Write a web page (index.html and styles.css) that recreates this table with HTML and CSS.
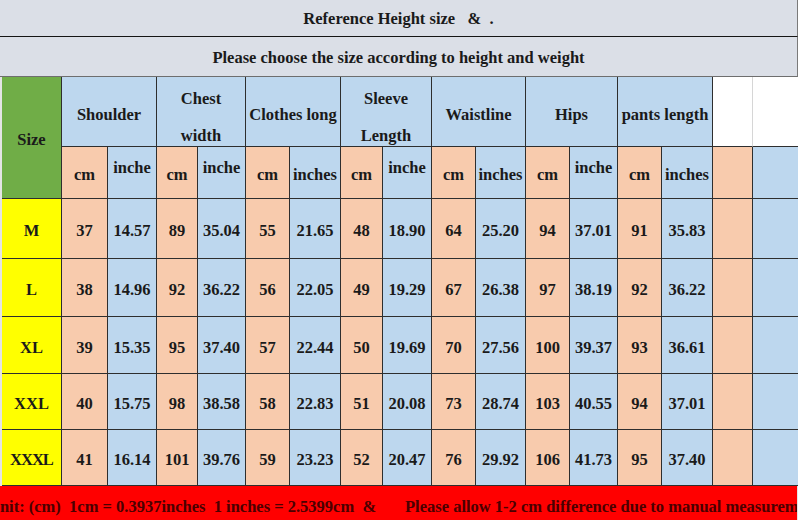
FILE: index.html
```html
<!DOCTYPE html>
<html lang="en">
<head>
<meta charset="utf-8">
<title>Size chart</title>
<link rel="stylesheet" href="styles.css">
</head>
<body>
<div class="page">
  <div class="band band-title">Reference Height size   &amp;  .</div>
  <div class="band band-sub">Please choose the size according to height and weight</div>
  <div class="chart">
    <div class="cell size-head">Size</div>
    <div class="cell blue head span2">Shoulder</div>
    <div class="cell blue head two span2">Chest<br>width</div>
    <div class="cell blue head span2">Clothes long</div>
    <div class="cell blue head two span2">Sleeve<br>Length</div>
    <div class="cell blue head span2">Waistline</div>
    <div class="cell blue head span2">Hips</div>
    <div class="cell blue head span2">pants length</div>
    <div class="cell blank"></div>
    <div class="cell blank last"></div>

    <div class="cell peach unit">cm</div><div class="cell blue unit raised">inche</div>
    <div class="cell peach unit">cm</div><div class="cell blue unit raised">inche</div>
    <div class="cell peach unit">cm</div><div class="cell blue unit">inches</div>
    <div class="cell peach unit">cm</div><div class="cell blue unit raised">inche</div>
    <div class="cell peach unit">cm</div><div class="cell blue unit">inches</div>
    <div class="cell peach unit">cm</div><div class="cell blue unit raised">inche</div>
    <div class="cell peach unit">cm</div><div class="cell blue unit">inches</div>
    <div class="cell peach"></div><div class="cell blue last"></div>

    <div class="cell size data">M</div>
    <div class="cell peach data">37</div><div class="cell blue data">14.57</div>
    <div class="cell peach data">89</div><div class="cell blue data">35.04</div>
    <div class="cell peach data">55</div><div class="cell blue data">21.65</div>
    <div class="cell peach data">48</div><div class="cell blue data">18.90</div>
    <div class="cell peach data">64</div><div class="cell blue data">25.20</div>
    <div class="cell peach data">94</div><div class="cell blue data">37.01</div>
    <div class="cell peach data">91</div><div class="cell blue data">35.83</div>
    <div class="cell peach"></div><div class="cell blue last"></div>

    <div class="cell size data">L</div>
    <div class="cell peach data">38</div><div class="cell blue data">14.96</div>
    <div class="cell peach data">92</div><div class="cell blue data">36.22</div>
    <div class="cell peach data">56</div><div class="cell blue data">22.05</div>
    <div class="cell peach data">49</div><div class="cell blue data">19.29</div>
    <div class="cell peach data">67</div><div class="cell blue data">26.38</div>
    <div class="cell peach data">97</div><div class="cell blue data">38.19</div>
    <div class="cell peach data">92</div><div class="cell blue data">36.22</div>
    <div class="cell peach"></div><div class="cell blue last"></div>

    <div class="cell size data">XL</div>
    <div class="cell peach data">39</div><div class="cell blue data">15.35</div>
    <div class="cell peach data">95</div><div class="cell blue data">37.40</div>
    <div class="cell peach data">57</div><div class="cell blue data">22.44</div>
    <div class="cell peach data">50</div><div class="cell blue data">19.69</div>
    <div class="cell peach data">70</div><div class="cell blue data">27.56</div>
    <div class="cell peach data">100</div><div class="cell blue data">39.37</div>
    <div class="cell peach data">93</div><div class="cell blue data">36.61</div>
    <div class="cell peach"></div><div class="cell blue last"></div>

    <div class="cell size data">XXL</div>
    <div class="cell peach data">40</div><div class="cell blue data">15.75</div>
    <div class="cell peach data">98</div><div class="cell blue data">38.58</div>
    <div class="cell peach data">58</div><div class="cell blue data">22.83</div>
    <div class="cell peach data">51</div><div class="cell blue data">20.08</div>
    <div class="cell peach data">73</div><div class="cell blue data">28.74</div>
    <div class="cell peach data">103</div><div class="cell blue data">40.55</div>
    <div class="cell peach data">94</div><div class="cell blue data">37.01</div>
    <div class="cell peach"></div><div class="cell blue last"></div>

    <div class="cell size data xxxl">XXXL</div>
    <div class="cell peach data">41</div><div class="cell blue data">16.14</div>
    <div class="cell peach data">101</div><div class="cell blue data">39.76</div>
    <div class="cell peach data">59</div><div class="cell blue data">23.23</div>
    <div class="cell peach data">52</div><div class="cell blue data">20.47</div>
    <div class="cell peach data">76</div><div class="cell blue data">29.92</div>
    <div class="cell peach data">106</div><div class="cell blue data">41.73</div>
    <div class="cell peach data">95</div><div class="cell blue data">37.40</div>
    <div class="cell peach"></div><div class="cell blue last"></div>
  </div>
  <div class="note"><span class="note-text">Unit: (cm)  1cm = 0.3937inches  1 inches = 2.5399cm  &amp;       Please allow 1-2 cm difference due to manual measurement</span></div>
</div>
</body>
</html>
```

FILE: styles.css
```css
html, body {
  margin: 0;
  padding: 0;
  background: #ffffff;
}

body {
  font-family: "Liberation Serif", "Times New Roman", serif;
  font-weight: bold;
  font-size: 16.5px;
  color: #1a1a1a;
  width: 800px;
  height: 520px;
  overflow: hidden;
}

.page {
  width: 798px;
  background: #e4e4e4;
}

.band {
  background: #dbdfe7;
  border-right: 1px solid #7a7a7a;
  white-space: pre;
  display: flex;
  align-items: center;
  justify-content: center;
  box-sizing: border-box;
}

.band-title {
  height: 37px;
  border-bottom: 1px solid #151515;
  padding-top: 1px;
}

.band-sub {
  height: 40px;
  border-bottom: 1px solid #6e6e6e;
  padding-top: 2px;
}

.chart {
  margin-left: 2px;
  width: 796px;
  display: grid;
  grid-template-columns: 60px 46px 49px 41px 48px 44px 51px 42px 49px 44px 50px 44px 48px 44px 51px 40px 45px;
  grid-template-rows: 70px 52px 60px 58px 57px 56px 56px;
}

.cell {
  box-sizing: border-box;
  border-right: 1px solid #2e2e2e;
  border-bottom: 1px solid #2e2e2e;
  display: flex;
  align-items: center;
  justify-content: center;
  text-align: center;
  white-space: nowrap;
  overflow: visible;
  min-width: 0;
}

.span2 {
  grid-column: span 2;
}

.head {
  line-height: 37px;
  padding-top: 5px;
}

.head.two {
  padding-top: 10px;
}

.size-head {
  grid-row: span 2;
  background: #70ad47;
  padding-top: 5px;
}

.blank {
  background: #ffffff;
  border-right: 1px solid #d6d6d6;
}

.last {
  border-right: none;
}

.unit {
  padding-top: 4px;
}

.unit.raised {
  padding-top: 0;
  padding-bottom: 9px;
}

.blue { background: #bdd7ee; }
.peach { background: #f8cbad; }

.size {
  background: #ffff00;
}

.xxxl {
  letter-spacing: -1px;
}

.data {
  padding-top: 5px;
}

.note {
  background: #ff0000;
  height: 34px;
  width: 797px;
  overflow: hidden;
  white-space: pre;
  color: #4a0000;
  display: flex;
  align-items: center;
  padding-top: 8px;
  box-sizing: border-box;
}

.note-text {
  margin-left: -12px;
}
```
